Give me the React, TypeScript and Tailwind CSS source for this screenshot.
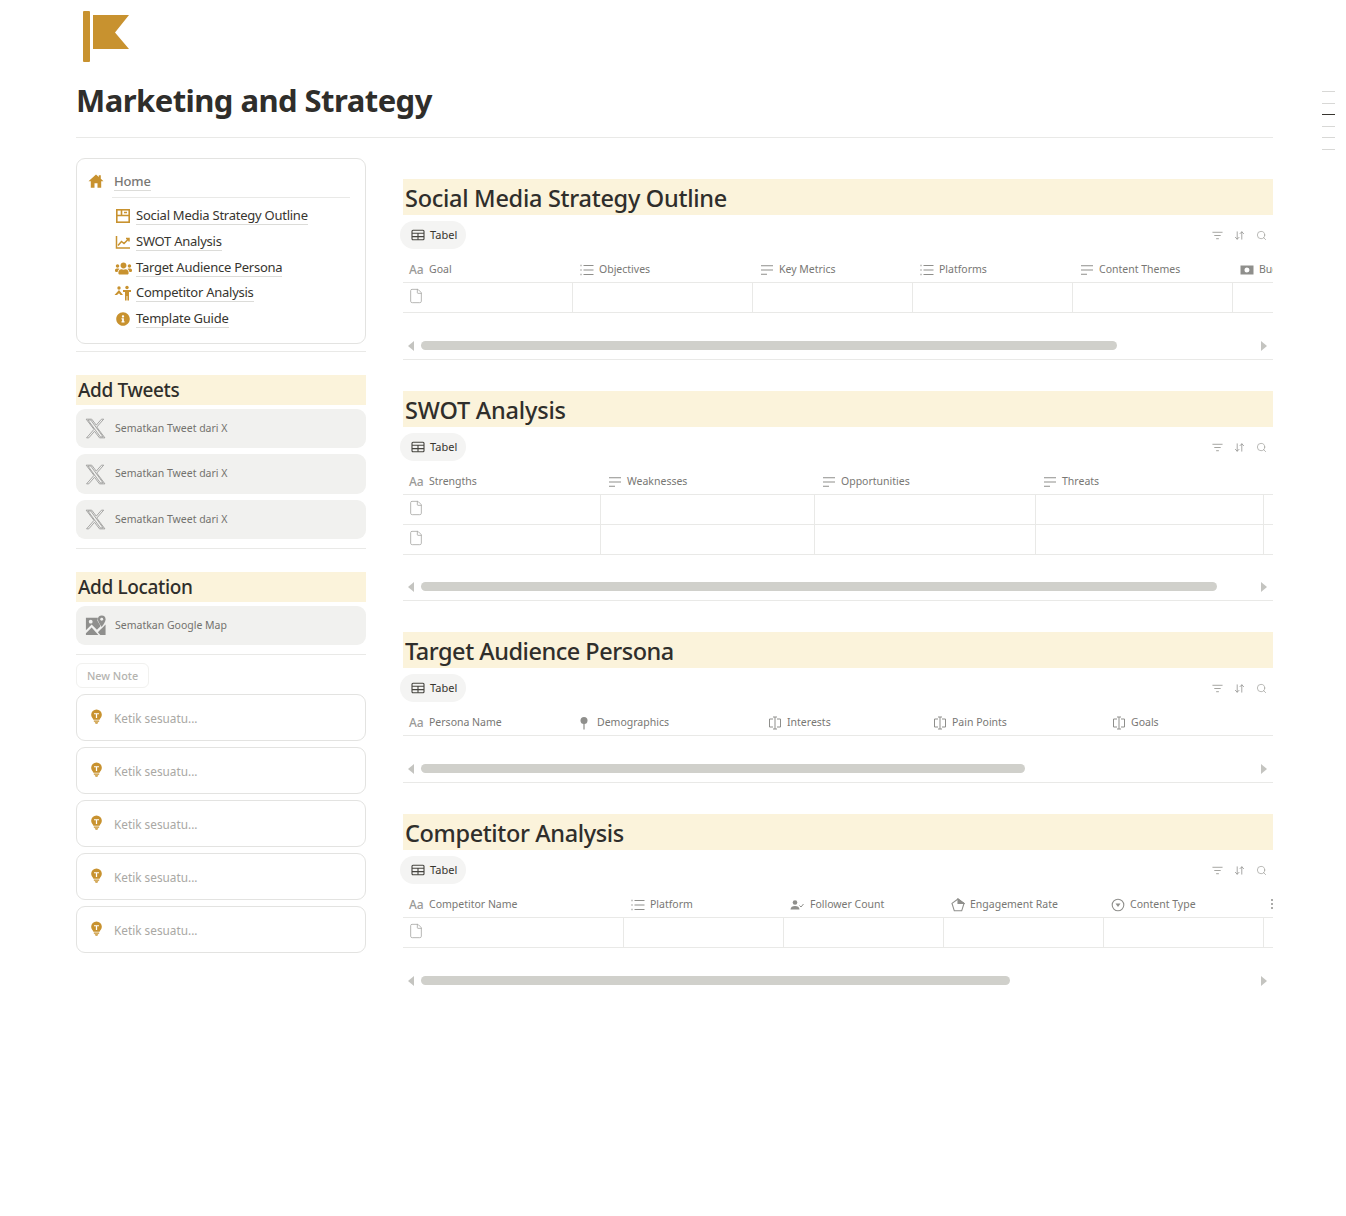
import React from "react";
import { ArrowDownUp, Search, File } from "lucide-react";
import { FaInfoCircle, FaUsers } from "react-icons/fa";

const cx = { stroke: "currentColor", fill: "none", strokeWidth: 1.5 } as const;

const Logo = () => (
  <svg viewBox="0 0 60 56" className="w-[60px] h-[56px] text-[#c8922f]" fill="currentColor">
    <rect x="7" y="5" width="7" height="51" rx="1" />
    <path d="M17 9H53L39 26.5L53 43H17Z" />
  </svg>
);
const HomeIcon = () => (
  <svg viewBox="0 0 16 16" className="w-[16px] h-[16px] text-[#c8922f]" fill="currentColor">
    <path d="M8 1.500L.5 8.300H2.800V14.800H6.500V10.300H9.500V14.800H13.200V8.300H15.500L12.800 5.800V2.200H10.800V4Z" />
  </svg>
);
const XLogo = () => (
  <svg viewBox="0 0 24 24" className="w-[23px] h-[23px] text-[#9a9a98]" fill="none" stroke="currentColor" strokeWidth="0.9">
    <path d="M18.244 2.250h2.300l-7.227 8.260 8.502 11.240H16.170l-5.214-6.817L4.990 21.750H2.680l7.730-8.835L2.254 2.250H8.080l4.713 6.231zm-1.161 18.520h2.833L7.084 3.126H4.117z" />
  </svg>
);
const MapIcon = () => (
  <svg viewBox="0 0 24 24" className="w-[23px] h-[23px] text-[#8f8f8d]" fill="currentColor">
    <path d="M2 4h12.500l-.5 3 3 5v1l-3.500 3.500L8 11l-6 6Z" />
    <circle cx="7" cy="8" r="2" fill="#f1f1ef" />
    <path d="M18.500 1.500a4 4 0 0 1 4 4c0 3-4 8-4 8s-4-5-4-8a4 4 0 0 1 4-4Z" />
    <circle cx="18.500" cy="5.500" r="1.500" fill="#f1f1ef" />
    <path d="M2 20l6-6 7 8H2ZM17 22l-2.500-3 3.500-3.500.5-.5 4-4V22Z" />
  </svg>
);
const PageIcon = () => (
  <svg viewBox="0 0 16 16" className="w-4 h-4 text-[#c8922f]" fill="none" stroke="currentColor" strokeWidth="1.6">
    <rect x="1.800" y="1.800" width="12.400" height="12.400" />
    <path d="M1.800 7.500H14.200M6.500 1.800V7.500M9 4.500H12" />
  </svg>
);
const ChartIcon = () => (
  <svg viewBox="0 0 16 16" className="w-4 h-4 text-[#c8922f]" fill="none" stroke="currentColor" strokeWidth="1.500">
    <path d="M1.500 2V14H15" />
    <path d="M3 11.500L6.500 7.500L9 9.500L13.500 5M11 4.500H14V7.500" />
  </svg>
);
const CompetitorIcon = () => (
  <svg viewBox="0 0 18 16" className="w-[18px] h-4 text-[#c8922f]" fill="currentColor">
    <circle cx="5" cy="3" r="1.700" />
    <path d="M.5 10L5 5L9 10H6.500L5 8.300L3 10Z" />
    <circle cx="13" cy="2.500" r="1.700" />
    <path d="M9 5H17V7H15V15.500H13.400V11H12.600V15.500H11V7H9Z" />
  </svg>
);
const Bulb = () => (
  <svg viewBox="0 0 14 18" className="w-[13px] h-[16px] text-[#c8922f]" fill="currentColor">
    <path d="M7 0.500a6 6 0 0 1 6 6c0 2.500-1.800 3.800-2.500 5.500h-7C2.800 10.300 1 9 1 6.500a6 6 0 0 1 6-6Z" />
    <path d="M4.200 4.700H9.800V6H7.700V10H6.300V6H4.200Z" fill="#fff" />
    <path d="M4 13H10V14.300H4ZM5 15H9L8 16.500H6Z" />
  </svg>
);
const TableIcon = () => (
  <svg viewBox="0 0 14 14" className="w-[14px] h-[14px] text-[#45443f]" {...cx} strokeWidth={1.1}>
    <rect x="1" y="2.200" width="12" height="9.600" rx="1" />
    <path d="M1 5.300H13M1 8.600H13M7 5.300V11.800" />
  </svg>
);
const FilterIcon = () => (
  <svg viewBox="0 0 12 12" className="w-[11px] h-[11px] text-[#9c9c98]" {...cx} strokeWidth={1}>
    <path d="M.5 2.500H11.500M2.500 6H9.500M4.500 9.500H7.500" />
  </svg>
);
const Bullets = () => (
  <svg viewBox="0 0 14 14" className="w-[14px] h-[14px] text-[#8f8f8c]" {...cx} strokeWidth={1}>
    <path d="M3.500 2.500H13.500M3.500 7H13.500M3.500 11.500H13.500" />
    <path d="M.5 2.500H1.500M.5 7H1.500M.5 11.500H1.500" strokeWidth={1.300} />
  </svg>
);
const TextLines = () => (
  <svg viewBox="0 0 14 14" className="w-[14px] h-[14px] text-[#8f8f8c]" {...cx} strokeWidth={1.100}>
    <path d="M1 2.800H13M1 7H13M1 11.200H7" />
  </svg>
);
const Money = () => (
  <svg viewBox="0 0 14 14" className="w-[14px] h-[14px] text-[#8f8f8c]" fill="currentColor">
    <path fillRule="evenodd" d="M.5 2.500H13.500V11.500H.5ZM7 4.500a2.500 2.500 0 1 0 0 5 2.500 2.500 0 0 0 0-5Z" />
  </svg>
);
const PinIcon = () => (
  <svg viewBox="0 0 14 14" className="w-[14px] h-[14px] text-[#8f8f8c]" fill="currentColor">
    <circle cx="7" cy="4.500" r="3.500" />
    <rect x="6.400" y="7" width="1.200" height="6.500" />
  </svg>
);
const Cursor = () => (
  <svg viewBox="0 0 14 14" className="w-[14px] h-[14px] text-[#8f8f8c]" {...cx} strokeWidth={1}>
    <path d="M5 3H1.500V11H5M9 3H12.500V11H9M5 1H9M5 13H9M7 1V13" />
  </svg>
);
const UserCheck = () => (
  <svg viewBox="0 0 14 14" className="w-[16px] h-[14px] text-[#8f8f8c]" fill="currentColor">
    <circle cx="5" cy="4.500" r="2.300" />
    <path d="M.5 11.500c0-2.500 2-3.500 4.500-3.500s4.500 1 4.500 3.500Z" />
    <path d="M9.500 7.500L11 9L13.500 6" fill="none" stroke="currentColor" strokeWidth="1" />
  </svg>
);
const Pentagon = () => (
  <svg viewBox="0 0 14 14" className="w-[14px] h-[14px] text-[#8f8f8c]" {...cx} strokeWidth={1.100}>
    <path d="M7 1L13 5.400L10.700 12.800H3.300L1 5.400Z" />
    <path d="M7 1V5.500L13 5.400Z" fill="currentColor" />
  </svg>
);
const CircleDown = () => (
  <svg viewBox="0 0 14 14" className="w-[14px] h-[14px] text-[#8f8f8c]" {...cx} strokeWidth={1.100}>
    <circle cx="7" cy="7" r="5.800" />
    <path d="M4.500 5.500H9.500L7 9Z" fill="currentColor" stroke="none" />
  </svg>
);
const Dots = () => (
  <svg viewBox="0 0 2 10" className="w-[2px] h-[10px] text-[#8f8f8c]" fill="currentColor">
    <circle cx="1" cy="1" r="1" /><circle cx="1" cy="5" r="1" /><circle cx="1" cy="9" r="1" />
  </svg>
);
const Aa = () => <span className="text-[12px] font-medium leading-none text-[#9a9a97] w-[15px]">Aa</span>;

const Band = ({ children }: { children: React.ReactNode }) => (
  <h3 className="h-[30px] bg-[#fbf3db] pl-[2px] text-[19px] leading-[30px] font-medium text-[#2f2e2b] tracking-[-0.35px]">{children}</h3>
);
const Rule = () => <div className="h-px bg-[#e9e9e7]" />;
const Embed = ({ map, label, cls }: { map?: boolean; label: string; cls: string }) => (
  <div className={`${cls} bg-[#f1f1ef] rounded-[9px] flex items-center pl-[8px] gap-[8px] text-[10.500px] text-[#73726e]`}>
    {map ? <MapIcon /> : <XLogo />}
    <span>{label}</span>
  </div>
);
const Note = () => (
  <div className="h-[47px] border border-[#e3e3e1] rounded-[9px] flex items-center pl-[13px] gap-[11px] text-[11.800px] text-[#a9a8a4]">
    <span className="-mt-[1px]"><Bulb /></span>
    <span className="pt-[2px]">Ketik sesuatu...</span>
  </div>
);
const NavItem = ({ icon, label, cls }: { icon: React.ReactNode; label: string; cls: string }) => (
  <div className={`${cls} flex items-center`}>
    <span className="w-[24px] ml-[-1px] mr-[1px] flex justify-center text-[#c8922f]">{icon}</span>
    <span className="border-b border-[#dcdcd9] text-[13px] leading-[17px] text-[#37352f] tracking-[-0.25px]">{label}</span>
  </div>
);

type Col = { w: string; icon: React.ReactNode; label: string; gap: string };
type Sec = {
  title: string; track: string; cols: Col[]; rows: number; thumb: string; bottom: boolean; end?: boolean; seps: string[]; scroll: string;
};

const Section = ({ s }: { s: Sec }) => (
  <section className={s.bottom ? "border-b border-[#e9e9e7]" : ""}>
    <h2 className={`${s.track} h-[36px] bg-[#fbf3db] pl-[2px] text-[23.500px] leading-[38px] font-medium text-[#2f2e2b]`}>{s.title}</h2>
    <div className="mt-[6px] h-[28px] flex items-center justify-between">
      <div className="h-[28px] -ml-[3px] pl-[11px] pr-[9px] bg-[#f4f4f3] rounded-full flex items-center gap-[5px] text-[11px] text-[#37352f]">
        <TableIcon />
        <span>Tabel</span>
      </div>
      <div className="flex items-center gap-[11px] pr-[6px]">
        <FilterIcon />
        <ArrowDownUp className="w-[11px] h-[11px] text-[#8f8f8c]" strokeWidth={1.700} />
        <Search className="w-[11px] h-[11px] text-[#9c9c98]" strokeWidth={1.500} />
      </div>
    </div>
    <div className="overflow-hidden relative">
      <div className="mt-[6px] h-[28px] flex border-b border-[#e9e9e7]">
        {s.cols.map((c) => (
          <div key={c.label} className={`${c.w} shrink-0 h-[27px] pt-[2px] flex items-center pl-[6px] text-[10.500px] whitespace-nowrap text-[#787774] ${c.gap}`}>
            <span className="flex justify-center items-center shrink-0">{c.icon}</span>
            <span>{c.label}</span>
          </div>
        ))}
        {s.end && <div className="ml-auto h-[27px] flex items-center"><Dots /></div>}
      </div>
      {Array.from({ length: s.rows }).map((_, i) => (
        <div key={i} className="h-[30px] flex border-b border-[#e9e9e7]">
          {s.seps.map((w, j) => (
            <div key={j} className={`${w} shrink-0 h-[29px] border-r last:border-r-0 border-[#e9e9e7] pl-[5px] pt-[5px]`}>
              {j === 0 && <File className="w-[16px] h-[16px] text-[#a5a5a1]" strokeWidth={1.200} />}
            </div>
          ))}
        </div>
      ))}
    </div>
    <div className={`${s.scroll} flex items-start pl-[5px] pr-[6px]`}>
      <svg viewBox="0 0 6 10" className="w-[6px] h-[10px] text-[#c4c4c0]" fill="currentColor"><path d="M6 0V10L0 5Z" /></svg>
      <div className={`${s.thumb} ml-[7px] h-[9px] rounded-full bg-[#d0d0cb]`} />
      <svg viewBox="0 0 6 10" className="w-[6px] h-[10px] ml-auto text-[#c4c4c0]" fill="currentColor"><path d="M0 0V10L6 5Z" /></svg>
    </div>
  </section>
);

const secs: Sec[] = [
  {
    title: "Social Media Strategy Outline", track: "tracking-[-0.28px]", rows: 1, thumb: "w-[696px]", bottom: true, scroll: "h-[46px] pt-[28px]",
    seps: ["w-[170px]", "w-[180px]", "w-[160px]", "w-[160px]", "w-[160px]", "w-[160px]"],
    cols: [
      { w: "w-[170px]", icon: <Aa />, label: "Goal", gap: "gap-[5px]" },
      { w: "w-[180px]", icon: <Bullets />, label: "Objectives", gap: "gap-[5px] !pl-[7px]" },
      { w: "w-[160px]", icon: <TextLines />, label: "Key Metrics", gap: "gap-[5px] !pl-[7px]" },
      { w: "w-[160px]", icon: <Bullets />, label: "Platforms", gap: "gap-[5px] !pl-[7px]" },
      { w: "w-[160px]", icon: <TextLines />, label: "Content Themes", gap: "gap-[5px] !pl-[7px]" },
      { w: "w-[160px]", icon: <Money />, label: "Budget", gap: "gap-[5px] !pl-[7px]" },
    ],
  },
  {
    title: "SWOT Analysis", track: "tracking-[-0.2px]", rows: 2, thumb: "w-[796px]", bottom: true, scroll: "h-[45px] pt-[27px]",
    seps: ["w-[198px]", "w-[214px]", "w-[221px]", "w-[228px]", "w-[9px]"],
    cols: [
      { w: "w-[198px]", icon: <Aa />, label: "Strengths", gap: "gap-[5px]" },
      { w: "w-[214px]", icon: <TextLines />, label: "Weaknesses", gap: "gap-[5px] !pl-[7px]" },
      { w: "w-[221px]", icon: <TextLines />, label: "Opportunities", gap: "gap-[5px] !pl-[7px]" },
      { w: "w-[228px]", icon: <TextLines />, label: "Threats", gap: "gap-[5px] !pl-[7px]" },
    ],
  },
  {
    title: "Target Audience Persona", track: "tracking-[-0.48px]", rows: 0, thumb: "w-[604px]", bottom: true, scroll: "h-[46px] pt-[28px]",
    seps: [],
    cols: [
      { w: "w-[170px]", icon: <Aa />, label: "Persona Name", gap: "gap-[5px]" },
      { w: "w-[188px]", icon: <PinIcon />, label: "Demographics", gap: "gap-[6px] !pl-[4px]" },
      { w: "w-[165px]", icon: <Cursor />, label: "Interests", gap: "gap-[5px] !pl-[7px]" },
      { w: "w-[179px]", icon: <Cursor />, label: "Pain Points", gap: "gap-[5px] !pl-[7px]" },
      { w: "w-[160px]", icon: <Cursor />, label: "Goals", gap: "gap-[5px] !pl-[7px]" },
    ],
  },
  {
    title: "Competitor Analysis", track: "tracking-[-0.37px]", rows: 1, thumb: "w-[589px]", bottom: false, end: true, scroll: "h-[46px] pt-[28px]",
    seps: ["w-[221px]", "w-[160px]", "w-[160px]", "w-[160px]", "w-[160px]", "w-[9px]"],
    cols: [
      { w: "w-[221px]", icon: <Aa />, label: "Competitor Name", gap: "gap-[5px]" },
      { w: "w-[160px]", icon: <Bullets />, label: "Platform", gap: "gap-[5px] !pl-[7px]" },
      { w: "w-[160px]", icon: <UserCheck />, label: "Follower Count", gap: "gap-[5px] !pl-[5px]" },
      { w: "w-[160px]", icon: <Pentagon />, label: "Engagement Rate", gap: "gap-[5px] !pl-[7px]" },
      { w: "w-[160px]", icon: <CircleDown />, label: "Content Type", gap: "gap-[5px] !pl-[7px]" },
    ],
  },
];

export default function App() {
  return (
    <div className="relative min-h-[1216px] bg-white pl-[76px] pr-[73px] font-['Noto_Sans','Open_Sans',sans-serif] text-[#37352f]">
      <div className="absolute right-[11px] top-[91px] flex flex-col gap-[10.500px]">
        <div className="w-[13px] h-px bg-[#d8d8d6]" />
        <div className="w-[13px] h-px bg-[#d8d8d6]" />
        <div className="w-[13px] h-px bg-[#37352f]" />
        <div className="w-[13px] h-px bg-[#d8d8d6]" />
        <div className="w-[13px] h-px bg-[#d8d8d6]" />
        <div className="w-[13px] h-px bg-[#d8d8d6]" />
      </div>

      <div className="pt-[6px] h-[62px]"><Logo /></div>
      <h1 className="mt-[18px] h-[40px] text-[31px] leading-[40px] font-bold text-[#2f2e2b] tracking-[-0.55px]">Marketing and Strategy</h1>
      <div className="mt-[17px] h-px bg-[#e9e9e7]" />

      <div className="mt-[20px] flex gap-[37px]">
        <aside className="w-[290px] shrink-0">
          <div className="h-[186px] border border-[#e3e3e1] rounded-[9px] pl-[11px] pr-[15px] pt-[12px]">
            <div className="flex items-center h-[22px]">
              <span className="mr-[10px] -mt-[2px]"><HomeIcon /></span>
              <span className="border-b border-[#dcdcd9] text-[13px] leading-[17px] font-medium text-[#787774] tracking-[-0.2px]">Home</span>
            </div>
            <div className="ml-[24px] mt-[4px] h-px bg-[#e9e9e7]" />
            <div className="mt-[5px]">
              <NavItem cls="h-[26px] pl-[24px]" icon={<PageIcon />} label="Social Media Strategy Outline" />
              <NavItem cls="h-[26px] pl-[24px]" icon={<ChartIcon />} label="SWOT Analysis" />
              <NavItem cls="h-[26px] pl-[24px]" icon={<FaUsers className="w-[17px] h-[15px]" />} label="Target Audience Persona" />
              <NavItem cls="h-[25px] pb-[1px] pl-[24px]" icon={<CompetitorIcon />} label="Competitor Analysis" />
              <NavItem cls="h-[26px] pl-[24px]" icon={<FaInfoCircle className="w-[14px] h-[14px]" />} label="Template Guide" />
            </div>
          </div>
          <div className="mt-[7px]"><Rule /></div>

          <div className="mt-[23px]"><Band>Add Tweets</Band></div>
          <div className="mt-[4px] flex flex-col gap-[6px]">
            <Embed cls="h-[39px]" label="Sematkan Tweet dari X" />
            <Embed cls="h-[40px]" label="Sematkan Tweet dari X" />
            <Embed cls="h-[39px]" label="Sematkan Tweet dari X" />
          </div>
          <div className="mt-[9px]"><Rule /></div>

          <div className="mt-[23px]"><Band>Add Location</Band></div>
          <div className="mt-[4px]"><Embed map cls="h-[39px]" label="Sematkan Google Map" /></div>
          <div className="mt-[9px]"><Rule /></div>

          <div className="mt-[8px] w-[73px] h-[25px] pt-[1px] border border-[#f1f1ef] rounded-[6px] flex items-center justify-center text-[10.800px] font-medium text-[#b4b3af]">New Note</div>
          <div className="mt-[6px] flex flex-col gap-[6px]">
            <Note /><Note /><Note /><Note /><Note />
          </div>
        </aside>

        <main className="w-[870px] shrink-0 pt-[21px] flex flex-col gap-[31px]">
          {secs.map((s) => <Section key={s.title} s={s} />)}
        </main>
      </div>
    </div>
  );
}
